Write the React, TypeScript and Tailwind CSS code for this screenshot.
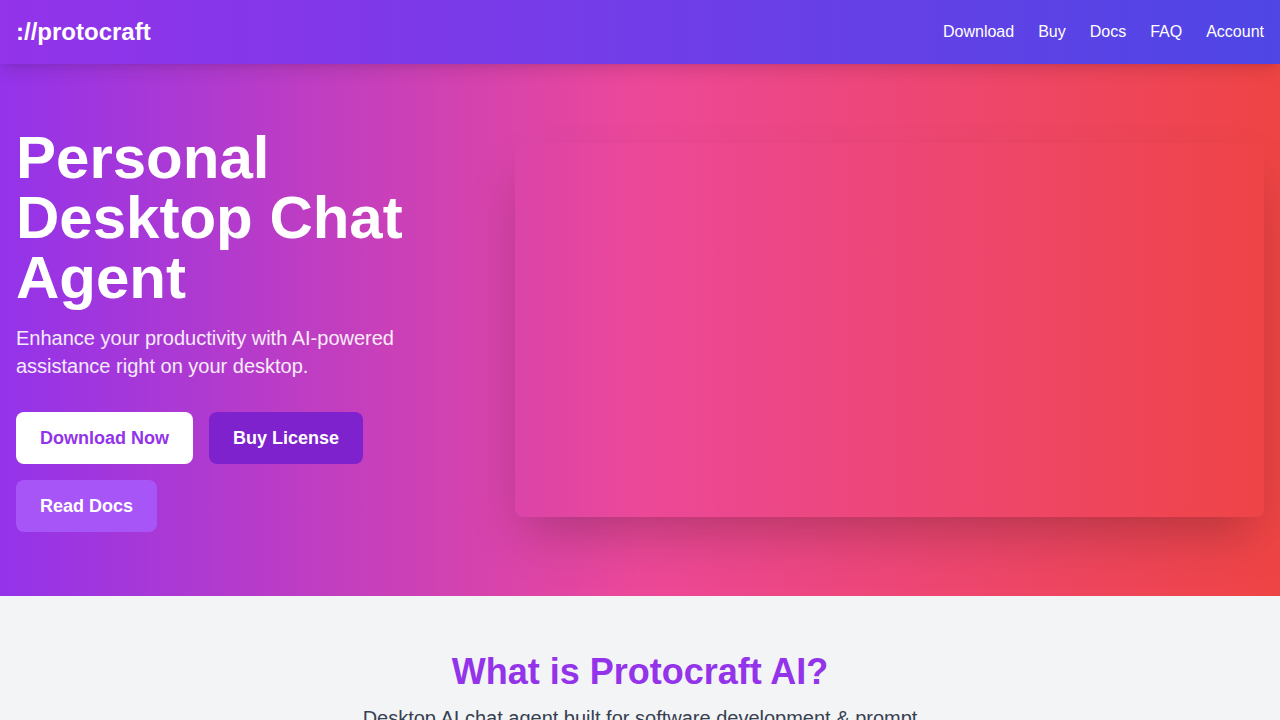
import React from 'react';

const navLinks = ['Download', 'Buy', 'Docs', 'FAQ', 'Account'];

export default function App() {
  return (
    <div className="min-h-screen bg-[#f3f4f6] font-['Liberation_Sans',Arial,sans-serif] text-[#1f2937]">
      <header className="sticky top-0 z-50 bg-linear-to-r/srgb from-[#9333ea] to-[#4f46e5] shadow-lg">
        <div className="px-4 py-4 flex items-center justify-between">
          <a href="#" className="text-2xl font-bold text-white">://protocraft</a>
          <nav className="flex items-center space-x-6">
            {navLinks.map((link) => (
              <a key={link} href="#" className="text-white hover:text-purple-200 transition">
                {link}
              </a>
            ))}
          </nav>
        </div>
      </header>

      {/* Hero */}
      <section className="bg-linear-to-r/srgb from-[#9333ea] via-[#ec4899] to-[#ef4444] py-16">
        <div className="px-4 flex items-center">
          <div className="w-2/5 pr-12">
            <h1 className="text-6xl font-bold text-white leading-none mb-4">
              Personal Desktop Chat Agent
            </h1>
            <p className="text-xl text-white/90 mb-8">
              Enhance your productivity with AI-powered assistance right on your desktop.
            </p>
            <div className="flex flex-wrap gap-4">
              <a href="#" className="bg-white text-[#9333ea] px-6 py-3 rounded-lg text-lg font-bold hover:bg-gray-100 transition">
                Download Now
              </a>
              <a href="#" className="bg-[#7e22ce] text-white px-6 py-3 rounded-lg text-lg font-bold hover:bg-[#6b21a8] transition">
                Buy License
              </a>
              <a href="#" className="bg-[#a855f7] text-white px-6 py-3 rounded-lg text-lg font-bold hover:bg-[#9333ea] transition">
                Read Docs
              </a>
            </div>
          </div>
          <div className="w-3/5">
            <div className="w-full aspect-[2/1] rounded-lg shadow-2xl" />
          </div>
        </div>
      </section>

      {/* What is */}
      <section className="pt-14 pb-16 text-center">
        <h2 className="text-4xl font-bold text-[#9333ea] mb-3">What is Protocraft AI?</h2>
        <p className="text-xl text-[#374151] max-w-xl mx-auto">
          Desktop AI chat agent built for software development &amp; prompt engineering, running locally with your own models and API keys.
        </p>
      </section>
    </div>
  );
}
